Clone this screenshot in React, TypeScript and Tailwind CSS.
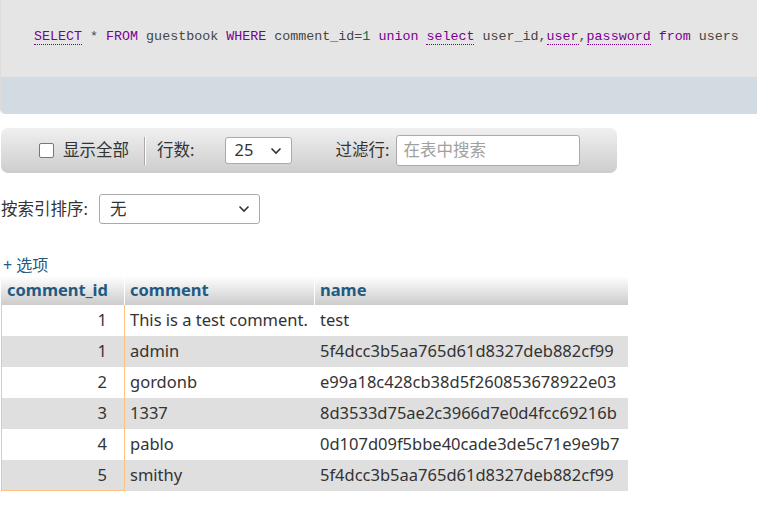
import React from "react";

type Row = { id: string; comment: string; name: string };

const rows: Row[] = [
  { id: "1", comment: "This is a test comment.", name: "test" },
  { id: "1", comment: "admin", name: "5f4dcc3b5aa765d61d8327deb882cf99" },
  { id: "2", comment: "gordonb", name: "e99a18c428cb38d5f260853678922e03" },
  { id: "3", comment: "1337", name: "8d3533d75ae2c3966d7e0d4fcc69216b" },
  { id: "4", comment: "pablo", name: "0d107d09f5bbe40cade3de5c71e9e9b7" },
  { id: "5", comment: "smithy", name: "5f4dcc3b5aa765d61d8327deb882cf99" },
];

const ui = { fontFamily: '"Noto Sans", "Noto Sans CJK SC", sans-serif' };
const mono = { fontFamily: '"Liberation Mono", "DejaVu Sans Mono", monospace' };

const Kw = ({ children, dotted }: { children: React.ReactNode; dotted?: boolean }) => (
  <span
    className={
      "text-[#7a0090] " + (dotted ? "border-b border-dotted border-[#7a0090]" : "")
    }
  >
    {children}
  </span>
);

const Chevron = () => (
  <svg width="12" height="8" viewBox="0 0 12 8" className="text-[#333]">
    <path d="M1.5 1.5 6 6l4.5-4.5" fill="none" stroke="currentColor" strokeWidth="1.6" />
  </svg>
);

const App: React.FC = () => {
  return (
    <div className="w-[757px] h-[511px] bg-white overflow-hidden text-[#333]" style={ui}>
      {/* query box */}
      <div className="border-l border-[#dcdcdc] rounded-bl-[5px] overflow-hidden">
        <div className="h-[77px] bg-[#e5e5e5] pl-[33px] pt-[26px]">
          <div className="text-[13.35px] leading-[22px] whitespace-nowrap text-[#444]" style={mono}>
            <Kw dotted>SELECT</Kw> * <Kw>FROM</Kw> guestbook <Kw>WHERE</Kw> comment_id=
            <span className="text-[#007050]">1</span> <Kw>union</Kw> <Kw dotted>select</Kw>{" "}
            user_id,<Kw dotted>user</Kw>,<Kw dotted>password</Kw> <Kw>from</Kw> users
          </div>
        </div>
        <div className="h-[37px] bg-[#d3dbe2]" />
      </div>

      {/* navigation bar */}
      <div className="mt-[14px] ml-px w-[616px] h-[45px] rounded-[7px] bg-gradient-to-b from-[#f0f0f0] to-[#cdcdcd] flex items-center text-[16.5px]">
        <div className="ml-[38px] w-[15px] h-[15px] border border-[#767676] rounded-[2px] bg-white" />
        <span className="ml-[9px]">显示全部</span>
        <div className="ml-[15px] w-[2px] h-[28px] bg-[#a8a8a8] border-r border-white" />
        <span className="ml-[11px]">行数:</span>
        <div className="ml-[31px] w-[67px] h-[27px] bg-white border border-[#aaa] rounded-[3px] flex items-center justify-between pl-[8px] pr-[9px]">
          <span>25</span>
          <Chevron />
        </div>
        <span className="ml-[43px]">过滤行:</span>
        <div className="ml-[7px] w-[184px] h-[31px] bg-white border border-[#aaa] rounded-[3px] flex items-center pl-[6px] text-[#a0a0a0]">
          在表中搜索
        </div>
      </div>

      {/* sort */}
      <div className="mt-[21px] flex items-center text-[16.5px]">
        <span className="ml-[1px]">按索引排序:</span>
        <div className="ml-[11px] w-[161px] h-[30px] bg-white border border-[#aaa] rounded-[3px] flex items-center justify-between pl-[10px] pr-[9px]">
          <span>无</span>
          <Chevron />
        </div>
      </div>

      {/* options */}
      <div className="mt-[32px] ml-[3px] text-[16px] leading-[18px] text-[#235a81]">+ 选项</div>

      {/* table */}
      <table className="mt-[2px] ml-px border-separate border-spacing-0 text-[16.5px]">
        <thead>
          <tr className="bg-gradient-to-b from-white to-[#cccccc] text-[#235a81]">
            <th className="h-[29px] w-[124px] text-left font-bold pl-[6px] border-r border-white">comment_id</th>
            <th className="h-[29px] w-[190px] text-left font-bold pl-[5px] border-r border-white">comment</th>
            <th className="h-[29px] w-[313px] text-left font-bold pl-[5px]">name</th>
          </tr>
        </thead>
        <tbody>
          {rows.map((r, i) => (
            <tr key={i} className={i % 2 ? "bg-[#dfdfdf]" : "bg-white"}>
              <td
                className={
                  "h-[31px] text-right pr-[17px] border-l border-r border-[#ffc283] " +
                  (i === rows.length - 1 ? "border-b" : "")
                }
              >
                {r.id}
              </td>
              <td className="h-[31px] pl-[5px] whitespace-nowrap">{r.comment}</td>
              <td className="h-[31px] pl-[5px] whitespace-nowrap">{r.name}</td>
            </tr>
          ))}
        </tbody>
      </table>
    </div>
  );
};

export default App;
